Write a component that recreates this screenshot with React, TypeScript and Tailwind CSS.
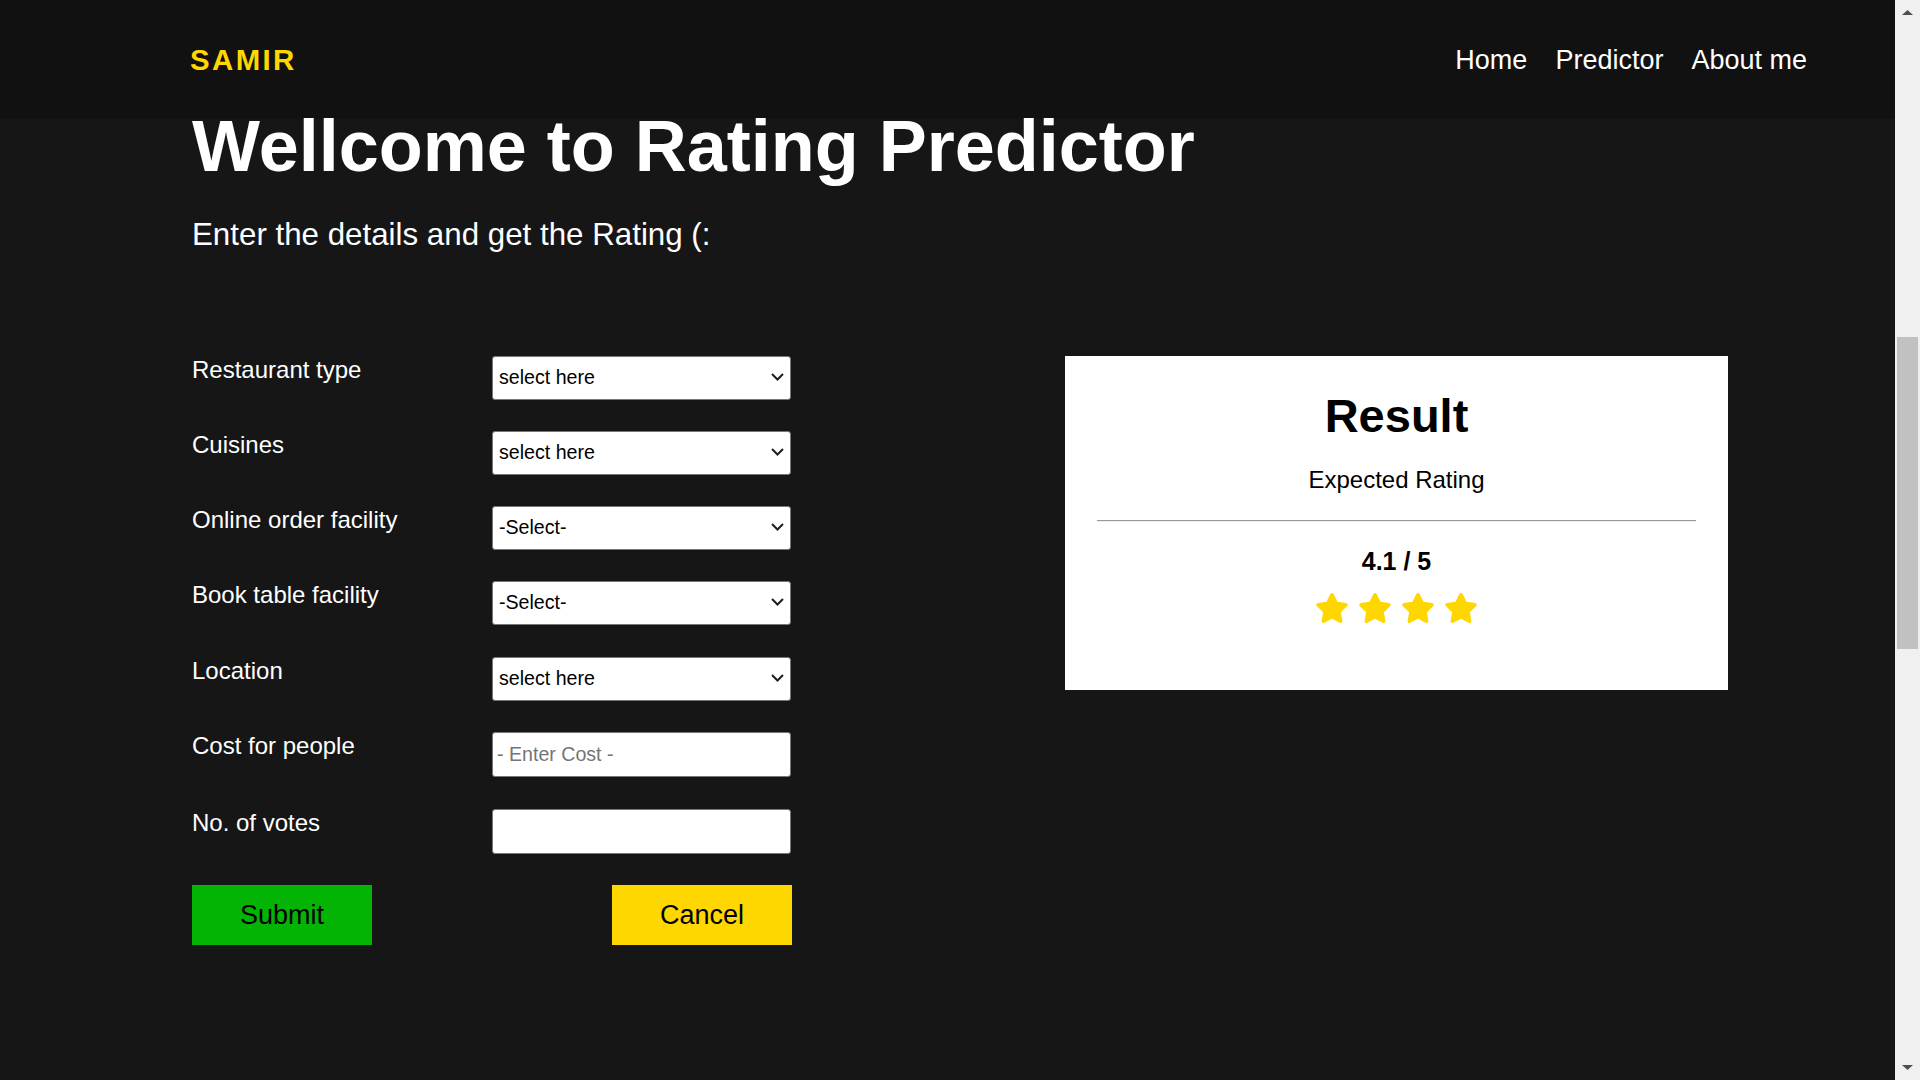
import { FaStar } from "react-icons/fa";

const selectFields = [
  { label: "Restaurant type", value: "select here" },
  { label: "Cuisines", value: "select here" },
  { label: "Online order facility", value: "-Select-" },
  { label: "Book table facility", value: "-Select-" },
  { label: "Location", value: "select here" },
];

const SelectBox = ({ value }: { value: string }) => {
  return (
    <div className="relative w-[299px]">
      <select
        defaultValue={value}
        className="appearance-none w-full h-[44px] bg-white border border-[#767676] rounded-[3px] pl-[6px] pr-[28px] text-[19.6px] text-black outline-none"
      >
        <option value={value}>{value}</option>
      </select>
      {/* chevron */}
      <svg
        className="absolute right-[7px] top-[17px] w-[13px] h-[8px] pointer-events-none"
        viewBox="0 0 13 8"
        fill="none"
      >
        <path d="M1 1 L6.5 6.5 L12 1" stroke="#1f1f1f" strokeWidth="2" />
      </svg>
    </div>
  );
};

const Scrollbar = () => {
  return (
    <div className="w-[25px] h-full bg-[#f0f0f0] flex flex-col items-center shrink-0">
      <svg className="mt-[10px] w-[11px] h-[5px]" viewBox="0 0 11 5">
        <polygon points="5.5,0 11,5 0,5" fill="#505050" />
      </svg>
      <div className="h-[322px]" />
      <div className="w-[21px] h-[312px] bg-[#c1c1c1]" />
      <div className="flex-1" />
      <svg className="mb-[10px] w-[11px] h-[5px]" viewBox="0 0 11 5">
        <polygon points="0,0 11,0 5.5,5" fill="#505050" />
      </svg>
    </div>
  );
};

const App = () => {
  return (
    <div className="flex h-screen w-full overflow-hidden bg-[#161616] text-white font-['Liberation_Sans',Arial,sans-serif]">
      <div className="flex-1 flex flex-col">
        {/* header */}
        <header className="h-[119px] shrink-0 bg-[#111111] flex items-center justify-between pl-[190px] pr-[88px]">
          <span className="text-[29.4px] leading-[29px] font-bold tracking-[2.4px] text-[#ffd700]">SAMIR</span>
          <nav className="flex gap-[28px] text-[27px] leading-[27px] mt-[2px]">
            <a>Home</a>
            <a>Predictor</a>
            <a>About me</a>
          </nav>
        </header>

        <main className="pl-[192px]">
          <h1 className="text-[72px] leading-[54px] font-bold">Wellcome to Rating Predictor</h1>
          <p className="mt-[46px] text-[31.3px] leading-[31px]">Enter the details and get the Rating (:</p>

          <div className="flex items-start mt-[106px]">
            {/* form */}
            <form className="w-[600px] flex flex-col gap-[31px]">
              {selectFields.map((f, i) => (
                <div key={f.label} className={i === 4 ? "flex items-start mt-[1px]" : "flex items-start"}>
                  <label className="w-[300px] pt-[2px] text-[24px] leading-[24px]">{f.label}</label>
                  <SelectBox value={f.value} />
                </div>
              ))}
              <div className="flex items-start">
                <label className="w-[300px] pt-[2px] text-[24px] leading-[24px]">Cost for people</label>
                <input
                  placeholder="- Enter Cost -"
                  className="w-[299px] h-[45px] bg-white border border-[#767676] rounded-[3px] pl-[4px] text-[19.6px] text-black placeholder:text-[#757575] outline-none"
                />
              </div>
              <div className="flex items-start mt-[1px]">
                <label className="w-[300px] pt-[2px] text-[24px] leading-[24px]">No. of votes</label>
                <input className="w-[299px] h-[45px] bg-white border border-[#767676] rounded-[3px] pl-[4px] text-[19.6px] text-black outline-none" />
              </div>
              <div className="flex justify-between">
                <button type="button" className="w-[180px] h-[60px] bg-[#04b404] text-black text-[27px] flex items-center justify-center">
                  Submit
                </button>
                <button type="button" className="w-[180px] h-[60px] bg-[#ffd700] text-black text-[27px] flex items-center justify-center">
                  Cancel
                </button>
              </div>
            </form>

            {/* result card */}
            <div className="ml-[273px] w-[663px] h-[334px] bg-white text-black flex flex-col items-center pt-[36px] px-[32px]">
              <h2 className="text-[47px] leading-[47px] font-bold">Result</h2>
              <p className="mt-[29px] text-[24px] leading-[24px]">Expected Rating</p>
              <div className="mt-[28px] w-full h-[2px] border-t border-t-[#9a9a9a] border-b border-b-[#eeeeee]" />
              <p className="mt-[27px] text-[25px] leading-[25px] font-bold">4.1 / 5</p>
              <div className="mt-[19px] flex gap-[9px] text-[#ffd700]">
                <FaStar className="w-[34px] h-[30px]" />
                <FaStar className="w-[34px] h-[30px]" />
                <FaStar className="w-[34px] h-[30px]" />
                <FaStar className="w-[34px] h-[30px]" />
              </div>
            </div>
          </div>
        </main>
      </div>
      <Scrollbar />
    </div>
  );
};

export default App;
